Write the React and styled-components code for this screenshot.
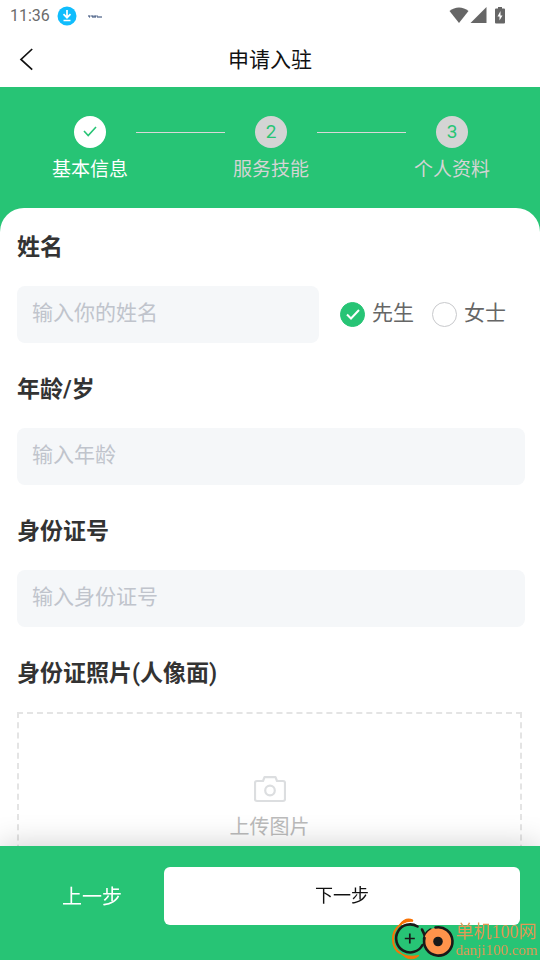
import React, {useState} from 'react';
import styled, {createGlobalStyle} from 'styled-components';

const GlobalStyle = createGlobalStyle`
  * {
    box-sizing: border-box;
  }

  body {
    margin: 0;
    background: #fff;
    font-family: Roboto, "Noto Sans CJK SC", sans-serif;
  }

  button, input {
    font-family: inherit;
  }
`;

const Page = styled.div`
  display: flex;
  flex-direction: column;
  height: 100vh;
  overflow: hidden;
  background: #fff;
`;

const StatusBar = styled.div`
  display: flex;
  align-items: center;
  justify-content: space-between;
  height: 31px;
  padding: 0 35px 0 10px;
  flex: none;
`;

const StatusGroup = styled.div`
  display: flex;
  align-items: center;
  gap: ${(props) => props.$gap}px;
`;

const Clock = styled.span`
  color: #6b6b6b;
  font-size: 16px;
  line-height: 20px;
`;

const NavBar = styled.header`
  display: grid;
  grid-template-columns: 56px 1fr 56px;
  align-items: center;
  height: 56px;
  flex: none;
`;

const BackButton = styled.button`
  display: flex;
  padding: 0 0 0 18px;
  border: 0;
  background: none;
`;

const Title = styled.h1`
  margin: 0;
  padding-top: 2px;
  color: #111;
  font-size: 21px;
  font-weight: 400;
  line-height: 32px;
  text-align: center;
`;

const Content = styled.main`
  flex: 1;
  min-height: 0;
  overflow-y: auto;
  scrollbar-width: none;
  background: #27c475;
`;

const Steps = styled.ol`
  display: flex;
  margin: 0;
  padding: 29px 42px 24px 44px;
  list-style: none;
`;

const Step = styled.li`
  display: flex;
  flex: none;
  flex-direction: column;
  align-items: center;
  gap: 8px;
  width: 92px;
  color: ${(props) => (props.$active ? '#fff' : '#d4d4d4')};
  font-size: 19px;
  line-height: 28px;
`;

const StepLine = styled.li`
  flex: 1;
  height: 1px;
  margin-top: 16px;
  background: #d8d8d8;
`;

const StepDot = styled.span`
  display: flex;
  align-items: center;
  justify-content: center;
  width: 32px;
  height: 32px;
  border-radius: 50%;
  background: ${(props) => (props.$active ? '#fff' : '#d4d4d4')};
  color: #27c475;
`;

const Form = styled.form`
  padding: 20px 15px 140px 17px;
  border-radius: 24px 24px 0 0;
  background: #fff;
`;

const Field = styled.div`
  padding-bottom: 25px;
`;

const FieldLabel = styled.label`
  display: block;
  margin-bottom: 18px;
  color: #333;
  font-size: 23px;
  font-weight: 600;
  line-height: 40px;
`;

const FieldRow = styled.div`
  display: flex;
  align-items: center;
  padding-bottom: 2px;
`;

const TextInput = styled.input`
  flex: 1;
  min-width: 0;
  height: 57px;
  padding: 0 15px 4px;
  border: 0;
  border-radius: 8px;
  outline: none;
  background: #f5f7f9;
  color: #333;
  font-size: 21px;

  &::placeholder {
    color: #c0c4cc;
    opacity: 1;
  }
`;

const RadioGroup = styled.div`
  display: flex;
  gap: 18px;
  padding: 0 19px 4px 21px;
`;

const RadioLabel = styled.label`
  display: flex;
  align-items: center;
  gap: 7px;
  color: #666;
  font-size: 21px;
  line-height: 32px;
`;

const RadioBox = styled.span`
  display: grid;
  margin-top: 4px;
  place-items: center;

  > * {
    grid-area: 1 / 1;
  }
`;

const Radio = styled.input`
  width: 25px;
  height: 25px;
  margin: 0;
  border: 1px solid #c8c9cc;
  border-radius: 50%;
  appearance: none;

  &:checked {
    border-color: #27c475;
    background: #27c475;
  }
`;

const RadioTick = styled.svg`
  pointer-events: none;
`;

const Upload = styled.button`
  display: flex;
  flex-direction: column;
  align-items: center;
  gap: 8px;
  width: calc(100% - 3px);
  height: 200px;
  padding: 62px 0 0;
  border: 2px dashed #e4e4e4;
  background: none;
  color: #bbb;
  font-size: 20px;
  line-height: 32px;
`;

const Footer = styled.footer`
  position: relative;
  display: flex;
  flex: none;
  padding: 21px 20px 35px;
  background: #27c475;
  box-shadow: 0 0 30px rgba(0, 0, 0, 0.2);
`;

const PrevButton = styled.button`
  width: 144px;
  padding: 0 0 2px;
  border: 0;
  background: none;
  color: #fff;
  font-size: 20px;
`;

const NextButton = styled.button`
  flex: 1;
  height: 58px;
  padding: 0 0 4px;
  border: 0;
  border-radius: 6px;
  background: #fff;
  color: #111;
  font-size: 18px;
`;

const Watermark = styled.div`
  position: absolute;
  right: 2px;
  bottom: 0;
  display: flex;
  align-items: flex-end;
  gap: 1px;
  color: #e39a57;
  font-family: "Liberation Serif", "Noto Sans CJK SC", serif;
  pointer-events: none;
`;

const WatermarkText = styled.div`
  display: flex;
  flex-direction: column;
  padding-bottom: 1px;
  font-size: 15px;
  line-height: 18px;
`;

const WatermarkName = styled.span`
  font-size: 18px;
`;

const DownloadIcon = () => (
  <svg width="20" height="20" viewBox="0 0 20 20" fill="none">
    <circle cx="10" cy="10" r="9.5" fill="#10bdfd" />
    <path d="M10 4v7.500M6.500 8.200l3.500 3.500 3.500-3.500M6.500 14.500h7" stroke="#fff" strokeWidth="1.7" />
  </svg>
);

const NoticeIcon = () => (
  <svg width="16" height="6" viewBox="0 0 16 6" fill="none" stroke="#27416f">
    <path d="M1 3h10" strokeDasharray="2.500 .6" />
    <path d="M2 4h1M5 4h4M10 4h5" />
  </svg>
);

const WifiIcon = () => (
  <svg width="20" height="18" viewBox="0 0 20 18" fill="#666">
    <path d="M.5 4C6-.8 14-.8 19.500 4L10 16Z" />
  </svg>
);

const SignalIcon = () => (
  <svg width="17" height="18" viewBox="0 0 17 18" fill="#666">
    <path d="M16.500 0V16H.5Z" />
  </svg>
);

const BatteryIcon = () => (
  <svg width="10" height="18" viewBox="0 0 10 18">
    <path d="M3 0h4v1.500h2q1 0 1 1v13q0 1-1 1H1q-1 0-1-1V2.500q0-1 1-1h2Z" fill="#666" />
    <path d="M5.500 4v4.500H7.500L4.500 13.500v-4H2.500Z" fill="#fff" />
  </svg>
);

const BackIcon = () => (
  <svg width="16" height="24" viewBox="0 0 16 24" fill="none" stroke="#111" strokeWidth="1.7">
    <path d="M14.200 2L3 12.500l11.200 10.200" />
  </svg>
);

const StepTick = () => (
  <svg width="14" height="12" viewBox="0 0 14 12" fill="none" stroke="#27c475" strokeWidth="1.600">
    <path d="M1 5l4.200 4.500L13 1" />
  </svg>
);

const CameraIcon = () => (
  <svg width="32" height="27" viewBox="0 0 32 27" fill="none" stroke="#dcdee0" strokeWidth="2.2">
    <path d="M3 5H9L10.500 1.200H21.500L23 5H29Q31 5 31 7V23Q31 25 29 25H3Q1 25 1 23V7Q1 5 3 5Z" strokeLinejoin="round" />
    <circle cx="16" cy="14.500" r="4.800" />
  </svg>
);

const WatermarkLogo = () => (
  <svg width="64" height="42" viewBox="0 0 64 42" fill="none">
    <path d="M21.500 2.500Q15-1 9 7Q2 12 2 21C2 28 5 33 9.500 35.500" stroke="#f97306" strokeWidth="2" />
    <path d="M22 3Q15-1 9 7L12 5Q16 2.500 22 3Z" fill="#f97306" stroke="#f97306" strokeWidth="1.500" />
    <path d="M8 34Q15 40 28 37.500Q22 43 15 39.500Z" fill="#f97306" stroke="#f97306" />
    <path d="M26.500 8.500A14 14 0 1 0 31.500 27" stroke="#191919" strokeWidth="2.600" strokeLinecap="round" />
    <path d="M31 11.500Q33 15 34 19M39.500 11.500Q34 15 33 21" stroke="#191919" strokeWidth="2.600" strokeLinecap="round" />
    <path d="M18.800 15.500v10M13.800 20.500h10" stroke="#191919" strokeWidth="1.700" />
    <circle cx="47" cy="23.500" r="14" fill="#ff934b" />
    <path d="M44.500 9.500A14.200 14.200 0 1 1 33.500 20" stroke="#191919" strokeWidth="2.600" strokeLinecap="round" />
    <circle cx="47" cy="23.500" r="4.800" fill="#191919" />
  </svg>
);

const App = () => {
  const [gender, setGender] = useState('先生');

  return (
    <Page>
      <GlobalStyle />
      <StatusBar>
        <StatusGroup $gap={7}>
          <Clock>11:36</Clock>
          <StatusGroup $gap={10}>
            <DownloadIcon />
            <NoticeIcon />
          </StatusGroup>
        </StatusGroup>
        <StatusGroup $gap={8}>
          <StatusGroup $gap={1}>
            <WifiIcon />
            <SignalIcon />
          </StatusGroup>
          <BatteryIcon />
        </StatusGroup>
      </StatusBar>

      <NavBar>
        <BackButton type="button" aria-label="返回">
          <BackIcon />
        </BackButton>
        <Title>申请入驻</Title>
      </NavBar>

      <Content>
        <Steps>
          <Step $active>
            <StepDot $active><StepTick /></StepDot>
            基本信息
          </Step>
          <StepLine aria-hidden="true" />
          <Step>
            <StepDot>2</StepDot>
            服务技能
          </Step>
          <StepLine aria-hidden="true" />
          <Step>
            <StepDot>3</StepDot>
            个人资料
          </Step>
        </Steps>

        <Form>
          <Field>
            <FieldLabel htmlFor="name">姓名</FieldLabel>
            <FieldRow>
              <TextInput id="name" placeholder="输入你的姓名" />
              <RadioGroup>
                {['先生', '女士'].map((item) => (
                  <RadioLabel key={item}>
                    <RadioBox>
                      <Radio
                        type="radio"
                        name="gender"
                        value={item}
                        checked={gender === item}
                        onChange={() => setGender(item)}
                      />
                      {gender === item && (
                        <RadioTick width="14" height="12" viewBox="0 0 14 12" fill="none" stroke="#fff" strokeWidth="2">
                          <path d="M1 5.500l4 4 8-8.500" />
                        </RadioTick>
                      )}
                    </RadioBox>
                    {item}
                  </RadioLabel>
                ))}
              </RadioGroup>
            </FieldRow>
          </Field>

          <Field>
            <FieldLabel htmlFor="age">年龄/岁</FieldLabel>
            <FieldRow>
              <TextInput id="age" placeholder="输入年龄" />
            </FieldRow>
          </Field>

          <Field>
            <FieldLabel htmlFor="idcard">身份证号</FieldLabel>
            <FieldRow>
              <TextInput id="idcard" placeholder="输入身份证号" />
            </FieldRow>
          </Field>

          <Field>
            <FieldLabel htmlFor="photo">身份证照片(人像面)</FieldLabel>
            <Upload id="photo" type="button">
              <CameraIcon />
              上传图片
            </Upload>
          </Field>
        </Form>
      </Content>

      <Footer>
        <PrevButton type="button">上一步</PrevButton>
        <NextButton type="button">下一步</NextButton>
        <Watermark>
          <WatermarkLogo />
          <WatermarkText>
            <WatermarkName>单机100网</WatermarkName>
            danji100.com
          </WatermarkText>
        </Watermark>
      </Footer>
    </Page>
  );
}

export default App;
